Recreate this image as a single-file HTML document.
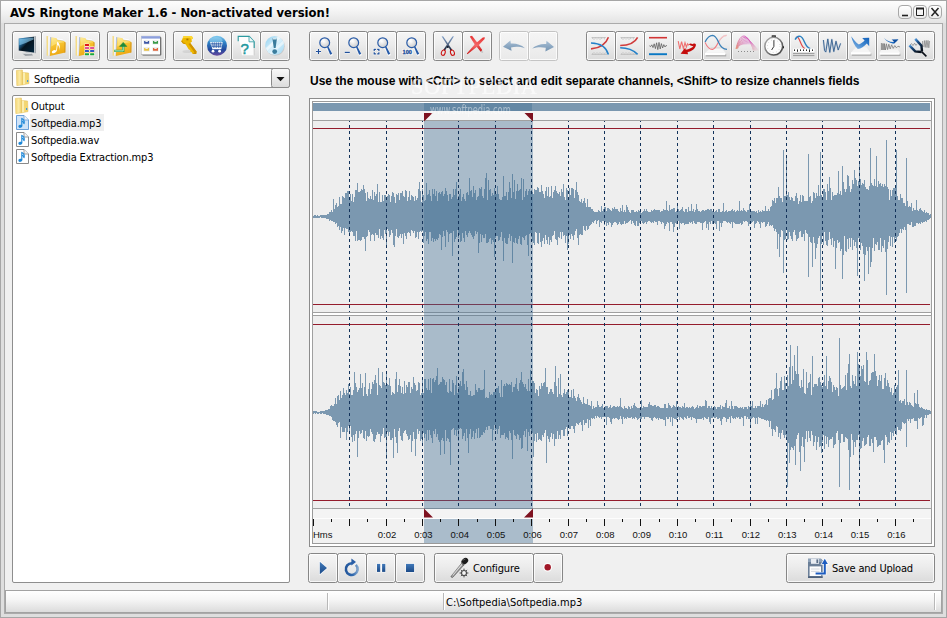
<!DOCTYPE html>
<html lang="en"><head><meta charset="utf-8"><title>AVS Ringtone Maker 1.6 - Non-activated version!</title>
<style>
html,body{margin:0;padding:0}
body{width:947px;height:618px;position:relative;overflow:hidden;background:#dedede;font-family:"Liberation Sans",sans-serif;font-size:11px;color:#000}
div,span,svg{position:absolute;box-sizing:border-box}
#win{left:0;top:0;width:947px;height:618px;border:1px solid #a6a6a6;background:#dedede}
#tbar{left:1px;top:1px;width:945px;height:22px;background:linear-gradient(#fdfdfd,#f4f4f4 45%,#e4e4e4)}
#title{left:10px;top:4px;font-weight:bold;font-size:12.9px;line-height:17px;white-space:nowrap;font-family:"DejaVu Sans Condensed","Liberation Sans",sans-serif}
.wb{top:5px;width:14px;height:14px;border:1px solid #a8a8a8;border-radius:4px;background:linear-gradient(#ffffff,#ececec)}
#frame{left:4px;top:23px;width:939px;height:591px;border:1px solid #ababab;background:#f0f0f0}
.btn{width:30px;height:30px;top:31px;border:1px solid #868686;border-radius:2.5px;background:linear-gradient(#f6f6f6,#ececec 45%,#dbdbdb);box-shadow:inset 0 0 0 1px rgba(255,255,255,.75)}
.btn.dis{border-color:#c4c4c4;background:linear-gradient(#f5f5f5,#e9e9e9)}
.btn svg{left:-1px;top:-1px;width:29px;height:30px;overflow:visible}
.pb{top:553px}
#combo{left:12px;top:68px;width:278px;height:20px;border:1px solid #8e8e8e;border-radius:3px;background:#fff}
#combobtn{left:271px;top:68px;width:19px;height:20px;border:1px solid #8a8a8a;border-radius:2.5px;background:linear-gradient(#f8f8f8,#dcdcdc)}
#list{left:12px;top:95px;width:278px;height:488px;border:1px solid #8e8e8e;border-radius:2px;background:#fff}
.it{left:0;height:17px;line-height:17px;white-space:nowrap;font-size:11px;letter-spacing:-0.15px;font-family:"DejaVu Sans Condensed","Liberation Sans",sans-serif}
.it span{position:absolute;left:19px;top:0}
#hint{left:310px;top:74px;font-weight:bold;font-size:12px;line-height:15px;white-space:nowrap}
#wv{left:309px;top:98px;width:626px;height:449px;border:1px solid #8c8c8c;background:#fff}
#wvsvg{left:0;top:0;width:947px;height:618px}
#status{left:5px;top:590px;width:937px;height:23px;border:1px solid #a2a2a2;background:linear-gradient(#ffffff,#f6f6f6 40%,#dcdcdc)}
#stxt{left:446px;top:596px;font-size:11px;line-height:14px;white-space:nowrap;font-family:"DejaVu Sans Condensed","Liberation Sans",sans-serif}
.tl{font-size:9.5px;line-height:11px;white-space:nowrap;color:#111}
.bl{font-size:11px;letter-spacing:-0.15px;line-height:14px;white-space:nowrap;font-family:"DejaVu Sans Condensed","Liberation Sans",sans-serif}
</style></head><body>
<svg width="0" height="0" style="left:0;top:0"><defs>
<linearGradient id="gold" x1="0" y1="0" x2="0.3" y2="1"><stop offset="0" stop-color="#fde99a"/><stop offset=".35" stop-color="#f9ca38"/><stop offset="1" stop-color="#eda814"/></linearGradient>
<linearGradient id="goldb" x1="0" y1="0" x2="1" y2="0"><stop offset="0" stop-color="#f1cf63"/><stop offset="1" stop-color="#fbeeb2"/></linearGradient>
<linearGradient id="bblue" x1="0" y1="0" x2="0" y2="1"><stop offset="0" stop-color="#4179b9"/><stop offset="1" stop-color="#1b4a88"/></linearGradient>
<radialGradient id="lens" cx=".4" cy=".35" r=".7"><stop offset="0" stop-color="#ffffff"/><stop offset="1" stop-color="#c9c9c9"/></radialGradient>
<linearGradient id="scr" x1="0" y1="0" x2="1" y2="1"><stop offset="0" stop-color="#5fb0e2"/><stop offset=".3" stop-color="#1d5f8e"/><stop offset=".5" stop-color="#06131e"/><stop offset="1" stop-color="#02263e"/></linearGradient>
<linearGradient id="globe" x1="0" y1="0" x2="0" y2="1"><stop offset="0" stop-color="#7fcbf0"/><stop offset=".35" stop-color="#2d7fc4"/><stop offset=".7" stop-color="#23489c"/><stop offset="1" stop-color="#6a4aa0"/></linearGradient>
<linearGradient id="abt" x1="0" y1="0" x2="1" y2="1"><stop offset="0" stop-color="#8fd0f0"/><stop offset=".5" stop-color="#d8f0fb"/><stop offset="1" stop-color="#9fd8f4"/></linearGradient>
<linearGradient id="redx" x1="0" y1="0" x2="0" y2="1"><stop offset="0" stop-color="#e83030"/><stop offset=".5" stop-color="#f46a6a"/><stop offset="1" stop-color="#c81010"/></linearGradient>
<linearGradient id="blade1" x1="0" y1="0" x2="0" y2="1"><stop offset="0" stop-color="#7d9cc6"/><stop offset=".5" stop-color="#5a6f8e"/><stop offset="1" stop-color="#10182a"/></linearGradient>
<linearGradient id="undo" x1="0" y1="0" x2="0" y2="1"><stop offset="0" stop-color="#a9c0d6"/><stop offset="1" stop-color="#7292b0"/></linearGradient>
<linearGradient id="arr" x1="0" y1="1" x2="1" y2="0"><stop offset="0" stop-color="#8fbbe6"/><stop offset=".5" stop-color="#3f86cf"/><stop offset="1" stop-color="#0b5cb8"/></linearGradient>
<linearGradient id="fan" x1="0" y1="1" x2=".6" y2="0"><stop offset="0" stop-color="#e89a6a"/><stop offset="1" stop-color="#cf3fb4"/></linearGradient>
<linearGradient id="fanfade" x1="0" y1="0" x2="1" y2="0"><stop offset="0" stop-color="#fff"/><stop offset=".55" stop-color="#fff"/><stop offset="1" stop-color="#000"/></linearGradient>
<linearGradient id="ring" x1="0" y1="0" x2="1" y2="1"><stop offset="0" stop-color="#b0b0b0"/><stop offset="1" stop-color="#3c3c3c"/></linearGradient>
<linearGradient id="fork" x1="0" y1="0" x2=".7" y2="1"><stop offset="0" stop-color="#4f9ae0"/><stop offset=".35" stop-color="#1f4f86"/><stop offset="1" stop-color="#0a1420"/></linearGradient>
<linearGradient id="loopg" x1="0" y1="0" x2="1" y2="0"><stop offset="0" stop-color="#24579c"/><stop offset=".6" stop-color="#2f68ae"/><stop offset="1" stop-color="#7fa3cc"/></linearGradient>
<linearGradient id="fold16" x1="0" y1="0" x2="1" y2="0"><stop offset="0" stop-color="#f4d877"/><stop offset=".5" stop-color="#fbeaa6"/><stop offset="1" stop-color="#eec95a"/></linearGradient>
</defs></svg>
<div id="win"></div>
<div id="tbar"></div>
<div id="title">AVS Ringtone Maker 1.6 - Non-activated version!</div>
<div class="wb" style="left:898px"><svg width="12" height="12" style="left:0;top:0"><path d="M3,9.5H9" stroke="#222" stroke-width="1.6"/></svg></div>
<div class="wb" style="left:913px"><svg width="12" height="12" style="left:0;top:0"><path d="M2.5,2.5H9.5V9.5H2.5Z" fill="none" stroke="#222" stroke-width="1"/><path d="M2,2.5H10" stroke="#222" stroke-width="2"/></svg></div>
<div class="wb" style="left:928px"><svg width="12" height="12" style="left:0;top:0"><path d="M2.5,2L9.5,10M9.5,2L2.5,10" stroke="#222" stroke-width="1.5"/></svg></div>
<div id="frame"></div>
<div class="btn" style="left:12px"><svg viewBox="0 0 29 30"><path d="M10.4,22.4L19.6,22.2L21,24.4L13.4,25Z" fill="#9ea3a8"/><path d="M13.6,20L18.6,21V22.8H13.6Z" fill="#c5c9cd"/><path d="M10.4,22.4L19.6,22.2L19.8,22.9L10.8,23.1Z" fill="#e3e6e8"/><path d="M6.6,7.4L23.6,5.2V22.2L6.6,19.6Z" fill="#aeb4ba"/><path d="M6.8,7.6L22.2,5.7V21.5L6.8,19.4Z" fill="url(#scr)"/><path d="M7.3,8.2L21.6,6.4V8.5C16,11 11,13.5 7.3,14.2Z" fill="#8fd0f4" opacity=".6"/><path d="M22.2,5.7L23.8,5.2V22.2L22.2,21.5Z" fill="#c8cdd2"/><path d="M23.2,5.4L23.8,5.2V22.2L23.2,22Z" fill="#8e949a"/></svg></div>
<div class="btn" style="left:41px"><svg viewBox="0 0 29 30"><path d="M5.6,4.9L7.6,5.2V24.5L5.8,24.8Z" fill="url(#goldb)"/><path d="M7.2,5.3L10.6,6.2L10.2,24L7.3,24.6Z" fill="#f6f7fb"/><path d="M9,6L10.8,6.6L10.2,24L8.6,24.4Z" fill="#b4bfd8"/><path d="M15.6,7.2L21.8,8.2L23,10.4L16.2,9.6Z" fill="#fcfcfe"/><path d="M15.8,8.4L22.4,9.4L23,10.4L16.2,9.6Z" fill="#c9d2e4"/><path d="M10.4,6.3L15.5,7.2L16.5,9.1L22.8,10.1L24.5,11.4L24.3,21.5L8.8,24.9Z" fill="url(#gold)"/><path d="M10.9,6.8L15.2,7.6L16.2,9.5L22.6,10.5L23.4,11.2C18,11.6 13.5,13 10.3,15.5Z" fill="#fdeea0" opacity=".55"/><path d="M24.5,11.4L24.3,21.5L23.4,21.7L23.5,10.7Z" fill="#c98a1c" opacity=".75"/><ellipse cx="13" cy="20.6" rx="2.3" ry="1.5" transform="rotate(-20 13 20.6)" fill="#fff"/><path d="M15,20.3L16.2,10.4C18.5,12.5 19.6,14.5 18.2,19.4C18.6,16 17.8,14.6 16.6,14L15.8,20.6Z" fill="#fff"/></svg></div>
<div class="btn" style="left:70px"><svg viewBox="0 0 29 30"><path d="M5.6,4.9L7.6,5.2V24.5L5.8,24.8Z" fill="url(#goldb)"/><path d="M7.2,5.3L10.6,6.2L10.2,24L7.3,24.6Z" fill="#f6f7fb"/><path d="M9,6L10.8,6.6L10.2,24L8.6,24.4Z" fill="#b4bfd8"/><path d="M15.6,7.2L21.8,8.2L23,10.4L16.2,9.6Z" fill="#fcfcfe"/><path d="M15.8,8.4L22.4,9.4L23,10.4L16.2,9.6Z" fill="#c9d2e4"/><path d="M10.4,6.3L15.5,7.2L16.5,9.1L22.8,10.1L24.5,11.4L24.3,21.5L8.8,24.9Z" fill="url(#gold)"/><path d="M10.9,6.8L15.2,7.6L16.2,9.5L22.6,10.5L23.4,11.2C18,11.6 13.5,13 10.3,15.5Z" fill="#fdeea0" opacity=".55"/><path d="M24.5,11.4L24.3,21.5L23.4,21.7L23.5,10.7Z" fill="#c98a1c" opacity=".75"/><rect x="14.450000000000001" y="12.55" width="5" height="2.9" rx=".5" fill="#fffdf2"/><rect x="14.9" y="13" width="4.1" height="2" rx=".3" fill="#e01818"/><rect x="14.450000000000001" y="15.600000000000001" width="5" height="2.9" rx=".5" fill="#fffdf2"/><rect x="14.9" y="16.05" width="4.1" height="2" rx=".3" fill="#e0509a"/><rect x="19.650000000000002" y="15.600000000000001" width="5" height="2.9" rx=".5" fill="#fffdf2"/><rect x="20.1" y="16.05" width="4.1" height="2" rx=".3" fill="#e0509a"/><rect x="14.450000000000001" y="18.650000000000002" width="5" height="2.9" rx=".5" fill="#fffdf2"/><rect x="14.9" y="19.1" width="4.1" height="2" rx=".3" fill="#2e58c8"/><rect x="19.650000000000002" y="18.650000000000002" width="5" height="2.9" rx=".5" fill="#fffdf2"/><rect x="20.1" y="19.1" width="4.1" height="2" rx=".3" fill="#2e58c8"/><rect x="14.450000000000001" y="21.7" width="5" height="2.9" rx=".5" fill="#fffdf2"/><rect x="14.9" y="22.15" width="4.1" height="2" rx=".3" fill="#18a83a"/><rect x="19.650000000000002" y="21.7" width="5" height="2.9" rx=".5" fill="#fffdf2"/><rect x="20.1" y="22.15" width="4.1" height="2" rx=".3" fill="#18a83a"/></svg></div>
<div class="btn" style="left:107px"><svg viewBox="0 0 29 30"><path d="M5.6,4.9L7.6,5.2V24.5L5.8,24.8Z" fill="url(#goldb)"/><path d="M7.2,5.3L10.6,6.2L10.2,24L7.3,24.6Z" fill="#f6f7fb"/><path d="M9,6L10.8,6.6L10.2,24L8.6,24.4Z" fill="#b4bfd8"/><path d="M15.6,7.2L21.8,8.2L23,10.4L16.2,9.6Z" fill="#fcfcfe"/><path d="M15.8,8.4L22.4,9.4L23,10.4L16.2,9.6Z" fill="#c9d2e4"/><path d="M10.4,6.3L15.5,7.2L16.5,9.1L22.8,10.1L24.5,11.4L24.3,21.5L8.8,24.9Z" fill="url(#gold)"/><path d="M10.9,6.8L15.2,7.6L16.2,9.5L22.6,10.5L23.4,11.2C18,11.6 13.5,13 10.3,15.5Z" fill="#fdeea0" opacity=".55"/><path d="M24.5,11.4L24.3,21.5L23.4,21.7L23.5,10.7Z" fill="#c98a1c" opacity=".75"/><path d="M7.2,19.9H16.2V14.5" fill="none" stroke="#35a557" stroke-width="2.4"/><path d="M7.8,19.9H16.2V14.5" fill="none" stroke="#c4f0d0" stroke-width=".9"/><path d="M16.2,11.4L19.8,15.4H12.6Z" fill="#1c8a3c" stroke="#1c8a3c" stroke-width=".6" stroke-linejoin="round"/></svg></div>
<div class="btn" style="left:136px"><svg viewBox="0 0 29 30"><rect x="6.1" y="6" width="19.2" height="18.4" rx="1" fill="#4a4a4a" opacity=".9"/><rect x="5" y="4.9" width="19.4" height="18.9" fill="#9a9a9a"/><rect x="5.4" y="5.2" width="18.6" height="18.2" fill="#fff"/><rect x="5.4" y="5.2" width="18.6" height="2.4" fill="#8c9fdc"/><rect x="7.3999999999999995" y="9.1" width="6.4" height="4.4" fill="#ececec"/><path d="M8.1,10h1.3v1h2.4v-1h1.3v2.8h-5z" fill="#3c55a5"/><rect x="16.3" y="9.1" width="6.4" height="4.4" fill="#ececec"/><path d="M17,10h1.3v1h2.4v-1h1.3v2.8h-5z" fill="#3c9a48"/><rect x="7.3999999999999995" y="16.1" width="6.4" height="4.4" fill="#ececec"/><path d="M8.1,17h1.3v1h2.4v-1h1.3v2.8h-5z" fill="#e8c040"/><rect x="16.3" y="16.1" width="6.4" height="4.4" fill="#ececec"/><path d="M17,17h1.3v1h2.4v-1h1.3v2.8h-5z" fill="#e0643c"/></svg></div>
<div class="btn" style="left:173px"><svg viewBox="0 0 29 30"><ellipse cx="15" cy="20.6" rx="5.5" ry="1.5" fill="#999" opacity=".22"/><path d="M10.4,5.2L18.8,5L20,7.4L18.4,8.6L19,10.6L17.2,12L23.6,20.6L23.2,23L19.6,23L18.8,21.2L17.4,20.8L17.2,19L15.8,18.6L12.6,13.2L10,12.6L8.2,10.2L9.4,8Z" fill="#eeb800"/><path d="M17.2,12L23.6,20.6L23.2,23L19.6,23L21.4,21.4L15.4,13Z" fill="#cf9200"/><path d="M10.4,5.2L18.8,5L20,7.4L18.4,8.6L17,6.8L10.6,7L9.4,8Z" fill="#fdd835"/><path d="M8.2,10.2L10,12.6L12.6,13.2L12.2,12L10.4,11.4L9.2,9.6Z" fill="#cf9200"/><rect x="13.4" y="7.6" width="2" height="1.7" fill="#a87800"/></svg></div>
<div class="btn" style="left:202px"><svg viewBox="0 0 29 30"><circle cx="15" cy="14.8" r="10" fill="url(#globe)"/><ellipse cx="14" cy="9.5" rx="6.5" ry="3.6" fill="#9fdcf6" opacity=".5"/><path d="M7.8,11.2H20.8L19.4,17H10.2Z" fill="#fff"/><path d="M10.2,17.6H19.4" stroke="#fff" stroke-width="1.2"/><path d="M8.4,12.6H20.4M9,14H20M9.6,15.5H19.6M10.6,11.4L11.4,17M12.6,11.4L13,17M14.6,11.4V17M16.6,11.4L16.4,17M18.6,11.4L18,17" stroke="#2a5aa8" stroke-width=".7" fill="none"/><circle cx="11" cy="20.2" r="1.4" fill="#fff"/><circle cx="17.6" cy="20.2" r="1.4" fill="#fff"/></svg></div>
<div class="btn" style="left:231px"><svg viewBox="0 0 29 30"><path d="M7.4,5.6H18L23.4,10.8V24.2H11Z" fill="#fff" opacity=".85"/><path d="M22.6,11V24L23.8,24.6V11Z" fill="#bbb" opacity=".6"/><path d="M7.2,10.2V5.4H18.2L23.2,10.6V17" fill="none" stroke="#2c9aa0" stroke-width="1.1"/><path d="M18,5.6V10.8H23" fill="#eef7f8" stroke="#2c9aa0" stroke-width=".8"/><text x="9.4" y="22.8" font-family="Liberation Sans,sans-serif" font-size="15" fill="#1d989e" stroke="#1d989e" stroke-width=".5">?</text></svg></div>
<div class="btn" style="left:260px"><svg viewBox="0 0 29 30"><circle cx="15.2" cy="15.2" r="9.6" fill="#999" opacity=".35"/><circle cx="14.7" cy="14.5" r="9.5" fill="url(#abt)"/><path d="M6,17L18,5.6L20.6,7L7,20Z" fill="#fff" opacity=".6"/><path d="M9.4,22L23.4,9.6L24,12.6L12,23.4Z" fill="#fff" opacity=".5"/><path d="M12.4,7.2H17L15.6,17H13.8Z" fill="#3a7c9c"/><path d="M12.6,7H16.8L16.6,8.6H12.8Z" fill="#cfe6f0"/><circle cx="14.7" cy="20.6" r="2.4" fill="#3a7c9c"/></svg></div>
<div class="btn" style="left:309px"><svg viewBox="0 0 29 30"><path d="M18.2,16L22.2,23.4" stroke="#fff" stroke-width="3.2" stroke-linecap="round" opacity=".7"/><path d="M17.8,15.4L19.2,15.2L23.2,22.8L21.2,23.8Z" fill="#2459a8"/><circle cx="15.7" cy="11.7" r="4.9" fill="url(#lens)" stroke="#2a5ca8" stroke-width="1.2"/><path d="M12.4,11A3.4,3.4 0 0 1 15.6,8.4" fill="none" stroke="#fff" stroke-width="1" opacity=".9"/><path d="M7,20.5H12M9.5,18V23" stroke="#fff" stroke-width="2.6" opacity=".8"/><path d="M7,20.5H12M9.5,18V23" stroke="#1f4f9a" stroke-width="1.2"/></svg></div>
<div class="btn" style="left:338px"><svg viewBox="0 0 29 30"><path d="M18.2,16L22.2,23.4" stroke="#fff" stroke-width="3.2" stroke-linecap="round" opacity=".7"/><path d="M17.8,15.4L19.2,15.2L23.2,22.8L21.2,23.8Z" fill="#2459a8"/><circle cx="15.7" cy="11.7" r="4.9" fill="url(#lens)" stroke="#2a5ca8" stroke-width="1.2"/><path d="M12.4,11A3.4,3.4 0 0 1 15.6,8.4" fill="none" stroke="#fff" stroke-width="1" opacity=".9"/><path d="M6.8,21.4H11.8" stroke="#fff" stroke-width="2.8" opacity=".8"/><path d="M6.8,21.4H11.8" stroke="#1f4f9a" stroke-width="1.3"/></svg></div>
<div class="btn" style="left:367px"><svg viewBox="0 0 29 30"><path d="M18.2,16L22.2,23.4" stroke="#fff" stroke-width="3.2" stroke-linecap="round" opacity=".7"/><path d="M17.8,15.4L19.2,15.2L23.2,22.8L21.2,23.8Z" fill="#2459a8"/><circle cx="15.7" cy="11.7" r="4.9" fill="url(#lens)" stroke="#2a5ca8" stroke-width="1.2"/><path d="M12.4,11A3.4,3.4 0 0 1 15.6,8.4" fill="none" stroke="#fff" stroke-width="1" opacity=".9"/><path d="M7.2,20V18.3H8.9M10.2,18.3H11.9V20M11.9,21.2V22.9H10.2M8.9,22.9H7.2V21.2" fill="none" stroke="#fff" stroke-width="2.6" opacity=".8"/><path d="M7.2,20V18.3H8.9M10.2,18.3H11.9V20M11.9,21.2V22.9H10.2M8.9,22.9H7.2V21.2" fill="none" stroke="#1f4f9a" stroke-width="1.2"/></svg></div>
<div class="btn" style="left:396px"><svg viewBox="0 0 29 30"><path d="M18.2,16L22.2,23.4" stroke="#fff" stroke-width="3.2" stroke-linecap="round" opacity=".7"/><path d="M17.8,15.4L19.2,15.2L23.2,22.8L21.2,23.8Z" fill="#2459a8"/><circle cx="15.7" cy="11.7" r="4.9" fill="url(#lens)" stroke="#2a5ca8" stroke-width="1.2"/><path d="M12.4,11A3.4,3.4 0 0 1 15.6,8.4" fill="none" stroke="#fff" stroke-width="1" opacity=".9"/><rect x="6" y="18.4" width="10.8" height="5.2" fill="#fff" opacity=".75"/><text x="6.6" y="23" font-family="Liberation Sans,sans-serif" font-weight="bold" font-size="5.4" fill="#1f4f9a" stroke="#1f4f9a" stroke-width=".3" textLength="9.4" lengthAdjust="spacingAndGlyphs">100</text></svg></div>
<div class="btn" style="left:433px"><svg viewBox="0 0 29 30"><path d="M8.6,5.2L10.2,5.4L19.2,18.8L17.8,19.8Z" fill="url(#blade1)"/><path d="M21,5.2L19.4,5.4L10.4,18.8L11.8,19.8Z" fill="url(#blade1)"/><ellipse cx="10.3" cy="21.7" rx="1.9" ry="2.8" transform="rotate(18 10.3 21.6)" fill="none" stroke="#cc1010" stroke-width="1.05"/><ellipse cx="19.4" cy="21.7" rx="1.9" ry="2.8" transform="rotate(-18 19.4 21.6)" fill="none" stroke="#cc1010" stroke-width="1.05"/><circle cx="14.8" cy="16" r="1" fill="#0c1424"/></svg></div>
<div class="btn" style="left:462px"><svg viewBox="0 0 29 30"><path d="M9,6.2L20.2,21" stroke="#777" stroke-width="2" opacity=".25" stroke-linecap="round"/><path d="M7.8,5.4L10,4.8L15.2,11.6L20.2,19L18.8,20.8L12.6,13.2Z" fill="url(#redx)"/><path d="M22.8,6.2L22.6,8L16,15L5.4,23.2L4.9,22.4L13,13L20.8,6.6Z" fill="url(#redx)"/></svg></div>
<div class="btn dis" style="left:499px"><svg viewBox="0 0 29 30"><path d="M4,15.8L11.4,9.4L11.8,12.6C17,12.2 22,13.6 26,17.2C21,15.4 16,15.4 12,16.4L12.6,19.8Z" fill="url(#undo)"/></svg></div>
<div class="btn dis" style="left:528px"><svg viewBox="0 0 29 30"><path d="M26,16L18.5,9.8L18.2,13C13,12.6 8,14 4.2,17.6C9,15.8 14,15.8 17.8,16.8L17.4,20.6Z" fill="url(#undo)"/></svg></div>
<div class="btn" style="left:586px"><svg viewBox="0 0 29 30"><path d="M5.5,6.5H20M6.5,6.5V8M8,6.5V9M9.5,6.5V7.6M11,6.5V8.6M12.5,6.5V7.6M14,6.5V9M15.5,6.5V8M17,6.5V7.6M18.5,6.5V8.4" stroke="#9a9a9a" stroke-width=".7" opacity=".6" fill="none"/><path d="M5.5,23.5H21M6.5,23.5V22M8,23.5V21M9.5,23.5V22.4M11,23.5V21.2M12.5,23.5V22.4M14,23.5V21M15.5,23.5V22M17,23.5V21.4M18.5,23.5V22M20,23.5V21" stroke="#a8a8a8" stroke-width=".7" opacity=".6" fill="none"/><path d="M5,17.9C12,17.4 19.5,14.5 22.4,6.3" fill="none" stroke="#d03c3c" stroke-width="1.6"/><path d="M5,12C13,12.2 20,15.5 22.4,23.4" fill="none" stroke="#2480c8" stroke-width="1.6"/></svg></div>
<div class="btn" style="left:615px"><svg viewBox="0 0 29 30"><path d="M5.5,6.5H20M6.5,6.5V8M8,6.5V9M9.5,6.5V7.6M11,6.5V8.6M12.5,6.5V7.6M14,6.5V9M15.5,6.5V8M17,6.5V7.6M18.5,6.5V8.4" stroke="#9a9a9a" stroke-width=".7" opacity=".6" fill="none"/><path d="M5.5,23.5H21M6.5,23.5V22M8,23.5V21M9.5,23.5V22.4M11,23.5V21.2M12.5,23.5V22.4M14,23.5V21M15.5,23.5V22M17,23.5V21.4M18.5,23.5V22M20,23.5V21" stroke="#a8a8a8" stroke-width=".7" opacity=".6" fill="none"/><path d="M5.2,14.5C12,14.4 19.5,12.5 22.6,6.3" fill="none" stroke="#d03c3c" stroke-width="1.6"/><path d="M5.2,16.8C12,16.8 18,18.8 22.6,23.4" fill="none" stroke="#2480c8" stroke-width="1.6"/></svg></div>
<div class="btn" style="left:644px"><svg viewBox="0 0 29 30"><path d="M5,6.7H23" stroke="#d23434" stroke-width="1.6"/><path d="M5,23.2H23" stroke="#0a78c4" stroke-width="1.9"/><path d="M5.4,14.8L6.6,15.6L7.8,13.8L9,16.6L10.2,12.8L11.4,17.6L12.6,11.8L13.8,18.6L15,11.4L16.2,18L17.4,12.6L18.6,17L19.8,13.6L21,16L22.2,14.4L23,15" fill="none" stroke="#5a5a5a" stroke-width=".75"/></svg></div>
<div class="btn" style="left:673px"><svg viewBox="0 0 29 30"><path d="M5.2,10.2L6.8,18L8.6,10.6L10.4,17.6L12,11.6L13.4,16L14.6,12.8L15.8,14.4" fill="none" stroke="#f07070" stroke-width="1.1"/><path d="M15.6,13.6C17,12.2 18.6,12.4 19.2,13.2C20.4,12.2 22.6,12.4 23,13.8C22.4,17.8 18.6,20.6 14.6,21L15,23.2L7.6,22.8L12.2,16.8L12.8,18.8C16,18.4 19.4,16.8 20.6,14.8C19.6,15.2 18.6,15.2 17.6,14.6C17,14 16.4,13.8 15.6,13.6Z" fill="#c40c0c"/></svg></div>
<div class="btn" style="left:702px"><svg viewBox="0 0 29 30"><path d="M8.6,17H19.6L23.4,21.8H3.4Z" fill="#f7f7f7"/><path d="M8.6,17H19.6" stroke="#c8c8c8" stroke-width=".6"/><rect x="3.8" y="23.2" width="20.4" height="2.2" fill="#777" opacity=".55"/><rect x="3" y="21.8" width="20.4" height="2.4" fill="#fff"/><path d="M3.1,11.4C6,18 8.6,18.6 10.6,18.4C13.4,18 15,14 16.5,11C18,8 20,4.8 24.6,4.4" fill="none" stroke="#f07a80" stroke-width="1.1"/><path d="M17,9.6C18.6,6.6 21,4.6 24.8,4.4" fill="none" stroke="#f4f4f4" stroke-width="1.6" opacity=".6"/><path d="M3.1,11C5.4,6.4 8,4.4 10.6,4.4C13.6,4.6 15,8 16.5,11.2C18,14.6 20.4,18.2 25,18.4" fill="none" stroke="#3a80b8" stroke-width="1.25"/></svg></div>
<div class="btn" style="left:731px"><svg viewBox="0 0 29 30"><mask id="fm"><rect x="0" y="0" width="29" height="30" fill="url(#fanfade)"/></mask><g mask="url(#fm)"><path d="M5.0,18.0C6.0,12.0 9.0,5.0 13.0,5.0C16.0,5.0 20.0,11.0 22.4,19.5" fill="none" stroke="url(#fan)" stroke-width=".8" opacity="0.95"/><path d="M5.3,17.9C6.3,12.0 10.2,6.3 14.2,6.3C17.2,6.3 21.0,12.3 23.4,19.5" fill="none" stroke="url(#fan)" stroke-width=".8" opacity="0.87"/><path d="M5.6,17.8C6.6,12.0 11.4,7.6 15.4,7.6C18.4,7.6 22.0,13.6 24.4,19.5" fill="none" stroke="url(#fan)" stroke-width=".8" opacity="0.79"/><path d="M5.9,17.7C6.9,12.0 12.6,8.9 16.6,8.9C19.6,8.9 23.0,14.9 25.4,19.5" fill="none" stroke="url(#fan)" stroke-width=".8" opacity="0.71"/><path d="M6.2,17.6C7.2,12.0 13.8,10.2 17.8,10.2C20.8,10.2 24.0,16.2 26.4,19.5" fill="none" stroke="url(#fan)" stroke-width=".8" opacity="0.63"/><path d="M6.5,17.5C7.5,12.0 15.0,11.5 19.0,11.5C22.0,11.5 25.0,17.5 27.4,19.5" fill="none" stroke="url(#fan)" stroke-width=".8" opacity="0.55"/><path d="M6.8,17.4C7.8,12.0 16.2,12.8 20.2,12.8C23.2,12.8 26.0,18.8 28.4,19.5" fill="none" stroke="url(#fan)" stroke-width=".8" opacity="0.47"/></g><path d="M7,20.5H24" stroke="#8a8a8a" stroke-width="1" stroke-dasharray="1,2"/></svg></div>
<div class="btn" style="left:760px"><svg viewBox="0 0 29 30"><circle cx="14.2" cy="15.8" r="9.3" fill="#777" opacity=".3"/><rect x="11.6" y="4.2" width="4.4" height="2" rx=".6" fill="#333"/><path d="M22.4,14.6L24,15.4V17.4L22.6,17Z" fill="#222"/><circle cx="13.7" cy="15.2" r="8.9" fill="#fdfdfd" stroke="url(#ring)" stroke-width="1.5"/><circle cx="13.7" cy="15.2" r="6.3" fill="none" stroke="#bbb" stroke-width=".8" stroke-dasharray=".7,2.6"/><path d="M13.9,9.2V15.4L11.6,19" fill="none" stroke="#222" stroke-width=".9" stroke-linejoin="round"/></svg></div>
<div class="btn" style="left:789px"><svg viewBox="0 0 29 30"><path d="M7,5.8C11,4.4 11.4,16.4 16,17.6" fill="none" stroke="#e24a4a" stroke-width="1.2"/><path d="M6.6,6C7.6,5.4 8.4,5.4 9,5.8" stroke="#f3eaea" stroke-width="1.4" fill="none" opacity=".8"/><path d="M6.1,8.6C7.4,6 9.4,4.8 11.4,5.4C15.6,6.8 15.4,16.6 21.3,17.7" fill="none" stroke="#2c80c0" stroke-width="1.4"/><rect x="4" y="17.6" width="21.4" height="3.4" fill="#fff"/><path d="M5.5,18.4V20M8.5,18.4V20.8M11.5,18.4V20M14.5,18.4V20M17.5,18.4V20M20.5,18.4V21M23.5,18.4V20" stroke="#111" stroke-width=".9"/><path d="M4,22.6H25.4M4,24.6H25.4" stroke="#9a9a9a" stroke-width="1"/></svg></div>
<div class="btn" style="left:818px"><svg viewBox="0 0 29 30"><path d="M5.4,9L6.6,19.6L7.8,21L9.8,8L11.8,21.4L13.8,8.4L15.8,20.6L18,10.2L20.2,19L22.6,12.4" fill="none" stroke="#9fb6cf" stroke-width="1.8" opacity=".45" stroke-linejoin="round"/><path d="M5.4,9L6.6,19.6L7.8,21L9.8,8L11.8,21.4L13.8,8.4L15.8,20.6L18,10.2L20.2,19L22.6,12.4" fill="none" stroke="#34608f" stroke-width=".9" stroke-linejoin="round"/></svg></div>
<div class="btn" style="left:847px"><svg viewBox="0 0 29 30"><path d="M9,16.2H19.4L23.4,21.4H4Z" fill="#f6f6f6" opacity=".9"/><rect x="4.8" y="22.6" width="19.6" height="2.2" fill="#777" opacity=".5"/><rect x="4" y="21.2" width="19.6" height="2.3" fill="#fff"/><path d="M4.2,5.2C6.8,8.6 9,11.6 11.8,13.4C14,12.8 16,11.4 17.6,9.6L15.2,7L22.2,6.8L22.2,15.2L19.8,12.4C17.2,15.4 14,17.6 10.8,18C7.6,15 5.2,10 4.2,5.2Z" fill="url(#arr)"/></svg></div>
<div class="btn" style="left:876px"><svg viewBox="0 0 29 30"><path d="M5.6,18.4H21.8L24,21.6H3.6Z" fill="#f6f6f6" opacity=".9"/><rect x="4.4" y="22.8" width="20" height="2.2" fill="#777" opacity=".5"/><rect x="3.6" y="21.4" width="20" height="2.3" fill="#fff"/><path d="M5.4,12V19M6.4,19V12.4M7.4,12.4V19M8.4,19V12.6L9.4,19L10.4,12.8L11.6,18.6L12.8,13.2L14.2,18L15.6,13.8L17.2,17.4L18.8,14.6L20.4,16.8L22,15.2L24,16" fill="none" stroke="#7a7a7a" stroke-width=".8"/><path d="M8,6.8C10,10 13,12 17,12.4L16.4,13.4L22,9L16,8.6L22.2,8.6L22,9.2L17.4,11C13,11 10,9.4 8,6.8Z" fill="#1f6cc0"/><path d="M15.6,8.4H22.4L18,12.8C18.4,11 17.6,9.6 15.6,8.4Z" fill="#0f4fa0"/></svg></div>
<div class="btn" style="left:905px"><svg viewBox="0 0 29 30"><path d="M5,14L6.6,12.6L8,14.6L9.6,12.2L11,14.4L12.2,12.8" fill="none" stroke="#8c8c8c" stroke-width=".8"/><path d="M17.6,10V16M18.8,16L19.4,9.6L20.2,16.4L21.2,9.4L22,16.6L23,9.4L23.8,16.8L24.6,10" fill="none" stroke="#8c8c8c" stroke-width=".8"/><path d="M10.2,7.9L16.4,14.6L17,20.4" fill="none" stroke="url(#fork)" stroke-width="2.4"/><path d="M4.4,14.4L10.2,20.4L16.6,21" fill="none" stroke="url(#fork)" stroke-width="2.4"/><path d="M16.6,20.6L21.4,25.4" stroke="#0a0f18" stroke-width="1.6"/></svg></div>
<div class="btn pb" style="left:308px"><svg viewBox="0 0 29 30"><path d="M11.8,8.8L19,15L11.8,21.2Z" fill="#fff" opacity=".8" stroke="#fff" stroke-width="1.4" stroke-linejoin="round"/><path d="M11.8,8.8L19,15L11.8,21.2Z" fill="url(#bblue)"/></svg></div>
<div class="btn pb" style="left:337px"><svg viewBox="0 0 29 30"><path d="M15,10.2A5.9,5.9 0 1 0 18.9,11.9" fill="none" stroke="url(#loopg)" stroke-width="2.6"/><path d="M14.4,5.6L19,9L14.4,12.6Z" fill="#2a5ea6"/></svg></div>
<div class="btn pb" style="left:366px"><svg viewBox="0 0 29 30"><rect x="10.4" y="10.3" width="9.4" height="9.2" fill="#fff" opacity=".7"/><rect x="11" y="10.9" width="3.2" height="8" fill="url(#bblue)"/><rect x="16.1" y="10.9" width="3.2" height="8" fill="url(#bblue)"/></svg></div>
<div class="btn pb" style="left:395px"><svg viewBox="0 0 29 30"><rect x="10.4" y="10.3" width="9.4" height="9.3" fill="#fff" opacity=".7"/><rect x="11" y="10.9" width="8.1" height="8.1" fill="url(#bblue)"/></svg></div>
<div class="btn pb" style="left:434px;width:100px"><svg viewBox="0 0 29 30"><path d="M17.6,22.6C16.4,23.8 18,25 19.4,23.6" fill="none" stroke="#333" stroke-width=".9"/><path d="M17.8,22.4L27.4,10.4L29.8,12.2L19.6,23.6Z" fill="#8c8c8c" stroke="#555" stroke-width=".5"/><path d="M18.4,22.2L27.8,10.8L28.6,11.4L19,22.8Z" fill="#e0e0e0"/><ellipse cx="30.8" cy="8.2" rx="3.7" ry="2.8" transform="rotate(-40 30.8 8.2)" fill="#1a1a1a"/><path d="M28.6,7.4L31.4,6" stroke="#777" stroke-width=".7"/><path d="M27.8,10L30,12.4" stroke="#666" stroke-width="1.4"/><circle cx="30" cy="20" r="2.5" fill="#f4f4f4" stroke="#4a4a4a" stroke-width="1.2"/><path d="M30,15.6V17M30,23V24.4M25.6,20H27M33,20H34.4M26.9,16.9L27.9,17.9M32.1,22.1L33.1,23.1M26.9,23.1L27.9,22.1M32.1,17.9L33.1,16.9" stroke="#4a4a4a" stroke-width="1"/></svg></div><div class="bl" style="left:473px;top:562px">Configure</div>
<div class="btn pb" style="left:533px"><svg viewBox="0 0 29 30"><circle cx="14.7" cy="14.2" r="4.5" fill="#fff" opacity=".8"/><circle cx="14.7" cy="14.2" r="3.2" fill="#a01828"/></svg></div>
<div class="btn pb" style="left:786px;width:149px"><svg viewBox="0 0 29 30"><path d="M22,5.8H35L36.6,7.4V24.8H22Z" fill="#6b7f98"/><path d="M22,5.8H35L36.6,7.4V9H22Z" fill="#8fa2b8"/><rect x="25" y="5.8" width="8" height="5" fill="#e8ecf2"/><rect x="30.4" y="6.4" width="1.8" height="3.6" fill="#5a6d86"/><rect x="23.6" y="13.4" width="11.4" height="9.6" fill="#fdfdfd"/><path d="M25,16H33.6M25,18.4H33.6" stroke="#c8ced8" stroke-width=".8"/><rect x="22" y="23.4" width="14.6" height="1.6" fill="#4f627c"/><path d="M29.6,20.6H38.8V10.8" fill="none" stroke="#fff" stroke-width="3.4" opacity=".8"/><path d="M38.8,5.4L42.2,11.2H35.4Z" fill="#fff" stroke="#fff" stroke-width="1.2" opacity=".8"/><path d="M29.6,20.6H38.8V10.6" fill="none" stroke="#1c5cc0" stroke-width="2"/><path d="M38.8,5.8L41.8,11H35.8Z" fill="#1c5cc0"/></svg></div><div class="bl" style="left:832px;top:562px;letter-spacing:-0.2px">Save and Upload</div>
<div id="combo"></div><div id="combobtn"><svg width="16" height="18" style="left:0;top:0"><path d="M4.5,8H12.5L8.5,12.3Z" fill="#111"/></svg></div>
<div id="list"></div>
<svg style="left:15px;top:69px;width:18px;height:18px" viewBox="0 0 18 18"><path d="M1.4,1.4L7.4,1L8,15.8L1.8,16.6Z" fill="url(#fold16)" stroke="#e3bd55" stroke-width=".5"/><path d="M7.6,3.4L13.6,4L14,14.6L8,15.8Z" fill="#f3d671" stroke="#e3bd55" stroke-width=".5"/><path d="M8,3.6L10,3.8L10.2,15.2L8,15.6Z" fill="#fbeeb0"/><rect x="12" y="11" width="1.2" height="2" fill="#3c9ae0"/></svg><div class="it" style="left:34px;top:71px">Softpedia</div>
<svg style="left:14px;top:97px;width:18px;height:18px" viewBox="0 0 18 18"><path d="M1.4,1.4L7.4,1L8,15.8L1.8,16.6Z" fill="url(#fold16)" stroke="#e3bd55" stroke-width=".5"/><path d="M7.6,3.4L13.6,4L14,14.6L8,15.8Z" fill="#f3d671" stroke="#e3bd55" stroke-width=".5"/><path d="M8,3.6L10,3.8L10.2,15.2L8,15.6Z" fill="#fbeeb0"/><rect x="12" y="11" width="1.2" height="2" fill="#3c9ae0"/></svg><div class="it" style="left:31px;top:98px">Output</div>
<div style="left:30px;top:114px;width:74px;height:17px;background:#efefef"></div>
<svg style="left:14px;top:114px;width:18px;height:18px" viewBox="0 0 18 18"><path d="M2.5,1.5H10L14.5,6V15.5H2.5Z" fill="#cfe3f8" stroke="#6a9fd8" stroke-width="1"/><path d="M10,1.5V6H14.5" fill="#f4f4f4" stroke="#6a9fd8" stroke-width=".8"/><ellipse cx="6.3" cy="12.3" rx="2" ry="1.5" transform="rotate(-15 6.3 12.3)" fill="#1e88d8"/><path d="M7.8,12.3V4.6C9.8,5.6 10.8,7.4 10,10C9.9,8.6 9.2,7.6 8.2,7.2" fill="none" stroke="#1e88d8" stroke-width="1.1"/></svg><div class="it" style="left:31px;top:115px">Softpedia.mp3</div>
<svg style="left:14px;top:131px;width:18px;height:18px" viewBox="0 0 18 18"><path d="M2.5,1.5H10L14.5,6V15.5H2.5Z" fill="#ffffff" stroke="#8a8a8a" stroke-width="1"/><path d="M10,1.5V6H14.5" fill="#f4f4f4" stroke="#8a8a8a" stroke-width=".8"/><ellipse cx="6.3" cy="12.3" rx="2" ry="1.5" transform="rotate(-15 6.3 12.3)" fill="#1e88d8"/><path d="M7.8,12.3V4.6C9.8,5.6 10.8,7.4 10,10C9.9,8.6 9.2,7.6 8.2,7.2" fill="none" stroke="#1e88d8" stroke-width="1.1"/></svg><div class="it" style="left:31px;top:132px">Softpedia.wav</div>
<svg style="left:14px;top:148px;width:18px;height:18px" viewBox="0 0 18 18"><path d="M2.5,1.5H10L14.5,6V15.5H2.5Z" fill="#ffffff" stroke="#8a8a8a" stroke-width="1"/><path d="M10,1.5V6H14.5" fill="#f4f4f4" stroke="#8a8a8a" stroke-width=".8"/><ellipse cx="6.3" cy="12.3" rx="2" ry="1.5" transform="rotate(-15 6.3 12.3)" fill="#1e88d8"/><path d="M7.8,12.3V4.6C9.8,5.6 10.8,7.4 10,10C9.9,8.6 9.2,7.6 8.2,7.2" fill="none" stroke="#1e88d8" stroke-width="1.1"/></svg><div class="it" style="left:31px;top:149px">Softpedia Extraction.mp3</div>
<div id="hint">Use the mouse with &lt;Ctrl&gt; to select and edit separate channels, &lt;Shift&gt; to resize channels fields</div>
<div id="wv"></div>
<svg id="wvsvg" viewBox="0 0 947 618" shape-rendering="crispEdges">
<rect x="312.5" y="101.5" width="619" height="442" fill="#f4f4f4" stroke="#9a9a9a"/>
<rect x="313" y="102" width="618" height="1" fill="#fff"/>
<rect x="313" y="103" width="617" height="8" fill="#7b98b0"/>
<rect x="312.5" y="120.5" width="619" height="192" fill="#eeeeee" stroke="#a0a0a0"/>
<rect x="312.5" y="315.5" width="619" height="193" fill="#eeeeee" stroke="#a0a0a0"/>
<rect x="313" y="313" width="618" height="2" fill="#fff"/>
<rect x="313" y="518" width="618" height="1" fill="#fdfdfd"/>
<rect x="313" y="519" width="618" height="24" fill="#f1f1f1"/>
<rect x="313" y="128" width="617" height="1" fill="#941c2c"/>
<rect x="313" y="304" width="617" height="1" fill="#941c2c"/>
<rect x="313" y="324" width="617" height="1" fill="#941c2c"/>
<rect x="313" y="500" width="617" height="1" fill="#941c2c"/>
<path d="M313.5,216V218M314.5,215V218M315.5,215V218M316.5,216V218M317.5,215V218M318.5,216V218M319.5,216V218M320.5,215V217M321.5,215V218M322.5,215V218M323.5,215V218M324.5,215V218M325.5,215V218M326.5,215V219M327.5,214V219M328.5,214V219M329.5,212V221M330.5,212V220M331.5,210V221M332.5,212V221M333.5,199V222M334.5,209V222M335.5,205V224M336.5,203V223M337.5,207V227M338.5,206V226M339.5,197V230M340.5,204V227M341.5,204V233M342.5,196V231M343.5,197V228M344.5,198V235M345.5,193V228M346.5,193V229M347.5,191V229M348.5,191V232M349.5,199V236M350.5,194V232M351.5,201V231M352.5,194V232M353.5,202V236M354.5,197V236M355.5,190V241M356.5,190V231M357.5,183V241M358.5,192V240M359.5,192V240M360.5,191V241M361.5,189V240M362.5,190V237M363.5,185V237M364.5,189V239M365.5,193V251M366.5,201V237M367.5,192V236M368.5,198V230M369.5,199V232M370.5,196V241M371.5,199V235M372.5,190V234M373.5,200V235M374.5,192V241M375.5,196V233M376.5,194V235M377.5,184V235M378.5,202V238M379.5,192V229M380.5,202V239M381.5,202V236M382.5,195V238M383.5,201V240M384.5,195V230M385.5,195V234M386.5,199V248M387.5,196V229M388.5,194V231M389.5,195V237M390.5,202V235M391.5,196V230M392.5,192V233M393.5,193V245M394.5,197V247M395.5,203V236M396.5,194V229M397.5,195V237M398.5,193V238M399.5,200V236M400.5,193V234M401.5,193V238M402.5,191V234M403.5,196V244M404.5,197V233M405.5,190V236M406.5,191V239M407.5,201V233M408.5,197V232M409.5,191V233M410.5,200V236M411.5,195V230M412.5,196V231M413.5,197V233M414.5,201V231M415.5,196V238M416.5,200V237M417.5,198V232M418.5,189V239M419.5,182V232M420.5,191V231M421.5,202V232M422.5,189V231M423.5,195V243M424.5,201V236M425.5,200V232M426.5,183V241M427.5,195V239M428.5,194V244M429.5,190V232M430.5,196V232M431.5,201V241M432.5,189V238M433.5,194V242M434.5,189V239M435.5,196V241M436.5,191V239M437.5,201V240M438.5,193V238M439.5,192V234M440.5,194V235M441.5,192V250M442.5,191V237M443.5,196V231M444.5,194V236M445.5,188V247M446.5,191V230M447.5,195V232M448.5,201V242M449.5,194V234M450.5,194V233M451.5,199V233M452.5,197V256M453.5,189V231M454.5,195V242M455.5,189V239M456.5,182V237M457.5,199V230M458.5,196V238M459.5,194V235M460.5,189V242M461.5,201V241M462.5,197V233M463.5,194V238M464.5,199V242M465.5,201V231M466.5,193V235M467.5,192V237M468.5,195V233M469.5,178V231M470.5,191V233M471.5,190V235M472.5,197V237M473.5,186V239M474.5,193V236M475.5,190V231M476.5,200V234M477.5,197V232M478.5,196V253M479.5,188V243M480.5,189V234M481.5,187V242M482.5,196V235M483.5,198V238M484.5,189V238M485.5,178V234M486.5,173V243M487.5,200V243M488.5,180V242M489.5,190V239M490.5,189V238M491.5,196V244M492.5,193V240M493.5,195V242M494.5,188V257M495.5,191V238M496.5,194V236M497.5,186V236M498.5,194V241M499.5,199V240M500.5,200V237M501.5,200V232M502.5,197V241M503.5,176V261M504.5,196V238M505.5,196V243M506.5,192V244M507.5,200V244M508.5,192V238M509.5,182V234M510.5,188V241M511.5,198V236M512.5,174V263M513.5,192V242M514.5,180V243M515.5,199V238M516.5,191V243M517.5,184V244M518.5,191V239M519.5,190V236M520.5,189V244M521.5,178V245M522.5,200V237M523.5,179V238M524.5,197V240M525.5,191V236M526.5,189V235M527.5,195V245M528.5,191V256M529.5,189V234M530.5,191V233M531.5,190V237M532.5,192V241M533.5,194V243M534.5,189V245M535.5,190V232M536.5,190V233M537.5,187V243M538.5,188V244M539.5,192V233M540.5,192V242M541.5,185V247M542.5,191V241M543.5,194V238M544.5,198V244M545.5,191V235M546.5,187V240M547.5,196V244M548.5,187V237M549.5,197V245M550.5,196V240M551.5,186V242M552.5,198V236M553.5,192V235M554.5,190V231M555.5,186V239M556.5,191V240M557.5,193V245M558.5,194V237M559.5,192V238M560.5,196V232M561.5,189V239M562.5,192V232M563.5,184V236M564.5,197V235M565.5,200V243M566.5,188V236M567.5,190V250M568.5,199V244M569.5,188V235M570.5,195V239M571.5,188V234M572.5,188V236M573.5,189V240M574.5,198V235M575.5,190V231M576.5,182V229M577.5,192V238M578.5,195V245M579.5,201V235M580.5,202V234M581.5,199V235M582.5,203V235M583.5,201V226M584.5,198V230M585.5,203V231M586.5,207V226M587.5,199V230M588.5,207V229M589.5,207V226M590.5,207V225M591.5,209V224M592.5,209V222M593.5,211V223M594.5,212V221M595.5,212V220M596.5,212V224M597.5,212V221M598.5,210V220M599.5,211V227M600.5,212V222M601.5,206V223M602.5,211V221M603.5,209V221M604.5,207V225M605.5,207V222M606.5,211V226M607.5,208V223M608.5,208V225M609.5,209V222M610.5,210V223M611.5,211V227M612.5,208V225M613.5,209V223M614.5,207V222M615.5,209V222M616.5,209V223M617.5,209V225M618.5,211V224M619.5,212V222M620.5,208V224M621.5,211V225M622.5,205V224M623.5,212V224M624.5,210V221M625.5,212V224M626.5,205V223M627.5,207V223M628.5,210V222M629.5,212V221M630.5,213V220M631.5,210V224M632.5,210V221M633.5,210V223M634.5,212V225M635.5,212V226M636.5,211V221M637.5,212V226M638.5,210V226M639.5,211V223M640.5,211V222M641.5,213V221M642.5,212V223M643.5,211V224M644.5,209V223M645.5,211V222M646.5,209V224M647.5,211V222M648.5,212V221M649.5,212V221M650.5,212V222M651.5,210V223M652.5,211V222M653.5,210V223M654.5,209V221M655.5,210V222M656.5,210V222M657.5,210V225M658.5,210V221M659.5,210V221M660.5,212V222M661.5,211V224M662.5,211V222M663.5,209V223M664.5,210V229M665.5,210V226M666.5,201V224M667.5,210V222M668.5,211V223M669.5,205V231M670.5,210V222M671.5,209V222M672.5,209V224M673.5,208V232M674.5,208V227M675.5,212V223M676.5,211V224M677.5,206V222M678.5,209V221M679.5,211V229M680.5,210V223M681.5,209V224M682.5,207V223M683.5,211V223M684.5,212V225M685.5,209V224M686.5,209V224M687.5,212V224M688.5,207V224M689.5,211V222M690.5,211V223M691.5,204V222M692.5,211V224M693.5,209V221M694.5,212V223M695.5,210V224M696.5,204V224M697.5,209V222M698.5,211V222M699.5,211V222M700.5,212V223M701.5,211V223M702.5,210V230M703.5,210V223M704.5,211V222M705.5,210V221M706.5,210V228M707.5,209V224M708.5,209V230M709.5,210V222M710.5,209V224M711.5,209V221M712.5,211V224M713.5,209V221M714.5,212V223M715.5,211V224M716.5,210V229M717.5,212V221M718.5,209V221M719.5,209V231M720.5,212V223M721.5,212V227M722.5,211V223M723.5,203V221M724.5,212V221M725.5,211V221M726.5,210V222M727.5,212V223M728.5,211V222M729.5,211V223M730.5,211V224M731.5,210V222M732.5,209V228M733.5,211V222M734.5,210V223M735.5,212V224M736.5,211V224M737.5,210V224M738.5,211V224M739.5,201V224M740.5,211V223M741.5,210V225M742.5,211V224M743.5,208V221M744.5,210V222M745.5,211V221M746.5,212V221M747.5,210V222M748.5,210V226M749.5,204V224M750.5,211V221M751.5,211V223M752.5,211V222M753.5,211V221M754.5,211V228M755.5,212V224M756.5,211V223M757.5,213V221M758.5,210V222M759.5,212V224M760.5,211V228M761.5,212V222M762.5,210V223M763.5,211V222M764.5,211V222M765.5,206V227M766.5,211V226M767.5,211V224M768.5,209V222M769.5,211V226M770.5,207V225M771.5,206V226M772.5,200V225M773.5,201V228M774.5,198V231M775.5,203V229M776.5,198V232M777.5,198V249M778.5,187V234M779.5,196V257M780.5,198V237M781.5,198V230M782.5,202V231M783.5,150V273M784.5,196V240M785.5,196V239M786.5,158V229M787.5,195V240M788.5,192V239M789.5,197V232M790.5,200V236M791.5,197V239M792.5,198V241M793.5,201V232M794.5,201V230M795.5,196V235M796.5,193V241M797.5,198V239M798.5,204V238M799.5,201V232M800.5,195V231M801.5,202V237M802.5,195V237M803.5,196V234M804.5,201V241M805.5,201V230M806.5,201V233M807.5,201V234M808.5,154V277M809.5,197V237M810.5,196V242M811.5,203V243M812.5,201V267M813.5,192V237M814.5,193V243M815.5,198V259M816.5,193V248M817.5,196V244M818.5,185V238M819.5,196V236M820.5,152V291M821.5,195V244M822.5,198V236M823.5,189V245M824.5,189V232M825.5,192V241M826.5,200V245M827.5,184V246M828.5,191V240M829.5,177V232M830.5,188V239M831.5,200V245M832.5,192V238M833.5,196V247M834.5,195V241M835.5,195V269M836.5,195V248M837.5,193V240M838.5,171V243M839.5,194V242M840.5,191V251M841.5,195V249M842.5,166V279M843.5,182V255M844.5,189V236M845.5,192V251M846.5,189V252M847.5,175V239M848.5,176V249M849.5,186V238M850.5,192V247M851.5,189V238M852.5,180V250M853.5,184V240M854.5,170V246M855.5,178V242M856.5,180V248M857.5,186V276M858.5,181V238M859.5,163V241M860.5,179V250M861.5,185V243M862.5,183V246M863.5,184V254M864.5,180V281M865.5,187V255M866.5,189V247M867.5,189V251M868.5,190V274M869.5,186V247M870.5,148V267M871.5,183V262M872.5,185V248M873.5,186V238M874.5,179V251M875.5,186V244M876.5,156V245M877.5,187V242M878.5,181V250M879.5,184V250M880.5,183V238M881.5,186V252M882.5,184V246M883.5,187V248M884.5,184V240M885.5,186V252M886.5,140V295M887.5,187V249M888.5,189V242M889.5,200V236M890.5,190V246M891.5,196V237M892.5,190V247M893.5,188V237M894.5,188V243M895.5,186V238M896.5,150V241M897.5,196V237M898.5,200V236M899.5,200V233M900.5,194V229M901.5,198V233M902.5,198V229M903.5,203V230M904.5,203V227M905.5,206V230M906.5,158V293M907.5,201V224M908.5,207V224M909.5,206V225M910.5,207V225M911.5,203V222M912.5,211V227M913.5,208V227M914.5,210V226M915.5,210V226M916.5,200V223M917.5,210V223M918.5,211V224M919.5,209V223M920.5,208V224M921.5,210V222M922.5,211V223M923.5,212V222M924.5,210V222M925.5,213V221M926.5,212V222M927.5,213V220M928.5,213V220M929.5,215V219M930.5,214V218M313.5,411V414M314.5,411V413M315.5,411V414M316.5,411V413M317.5,412V414M318.5,412V414M319.5,412V413M320.5,411V414M321.5,411V414M322.5,411V413M323.5,411V414M324.5,411V414M325.5,410V414M326.5,410V415M327.5,410V415M328.5,409V415M329.5,409V416M330.5,406V416M331.5,405V417M332.5,406V420M333.5,406V421M334.5,404V421M335.5,398V422M336.5,404V425M337.5,396V427M338.5,395V423M339.5,400V422M340.5,391V438M341.5,398V427M342.5,395V432M343.5,388V432M344.5,393V432M345.5,395V428M346.5,390V440M347.5,393V432M348.5,384V426M349.5,394V432M350.5,387V426M351.5,395V437M352.5,395V442M353.5,390V435M354.5,372V441M355.5,383V434M356.5,387V431M357.5,392V457M358.5,390V438M359.5,388V431M360.5,374V434M361.5,388V433M362.5,383V430M363.5,396V438M364.5,387V439M365.5,373V431M366.5,394V441M367.5,396V436M368.5,389V437M369.5,383V436M370.5,394V429M371.5,389V432M372.5,382V434M373.5,384V441M374.5,380V442M375.5,375V439M376.5,383V435M377.5,395V432M378.5,368V434M379.5,385V434M380.5,386V442M381.5,388V436M382.5,372V434M383.5,382V428M384.5,383V438M385.5,385V437M386.5,374V459M387.5,384V432M388.5,385V436M389.5,378V432M390.5,386V440M391.5,395V440M392.5,392V438M393.5,393V458M394.5,394V429M395.5,379V437M396.5,372V443M397.5,392V453M398.5,385V431M399.5,379V428M400.5,386V436M401.5,393V440M402.5,387V441M403.5,394V433M404.5,381V431M405.5,393V430M406.5,385V434M407.5,387V436M408.5,382V440M409.5,382V439M410.5,393V435M411.5,387V452M412.5,389V441M413.5,377V432M414.5,383V439M415.5,385V456M416.5,391V439M417.5,390V429M418.5,382V434M419.5,383V431M420.5,395V441M421.5,393V439M422.5,379V443M423.5,393V433M424.5,379V438M425.5,379V434M426.5,388V441M427.5,390V430M428.5,379V440M429.5,390V430M430.5,378V435M431.5,393V438M432.5,379V443M433.5,378V431M434.5,382V434M435.5,380V429M436.5,376V437M437.5,368V434M438.5,385V440M439.5,384V442M440.5,382V455M441.5,382V440M442.5,377V438M443.5,379V441M444.5,380V454M445.5,385V430M446.5,382V441M447.5,392V438M448.5,393V439M449.5,379V442M450.5,391V465M451.5,392V430M452.5,380V429M453.5,383V428M454.5,395V435M455.5,385V430M456.5,376V436M457.5,393V430M458.5,387V441M459.5,384V429M460.5,381V428M461.5,386V429M462.5,372V439M463.5,369V436M464.5,384V433M465.5,390V441M466.5,381V429M467.5,387V438M468.5,395V453M469.5,395V434M470.5,391V429M471.5,396V439M472.5,396V437M473.5,395V431M474.5,395V439M475.5,384V433M476.5,390V429M477.5,392V438M478.5,388V428M479.5,388V438M480.5,390V437M481.5,390V435M482.5,390V435M483.5,389V432M484.5,370V433M485.5,398V430M486.5,397V427M487.5,398V430M488.5,398V426M489.5,392V426M490.5,395V429M491.5,394V429M492.5,395V441M493.5,392V430M494.5,392V425M495.5,390V430M496.5,388V429M497.5,388V434M498.5,386V429M499.5,393V426M500.5,397V438M501.5,380V435M502.5,397V435M503.5,386V435M504.5,384V433M505.5,386V439M506.5,383V437M507.5,384V438M508.5,385V440M509.5,384V431M510.5,385V433M511.5,382V440M512.5,392V459M513.5,387V430M514.5,387V435M515.5,384V436M516.5,378V439M517.5,389V434M518.5,391V435M519.5,383V440M520.5,380V438M521.5,372V449M522.5,382V448M523.5,384V435M524.5,387V431M525.5,384V437M526.5,389V429M527.5,391V451M528.5,379V432M529.5,391V436M530.5,370V429M531.5,383V433M532.5,381V433M533.5,381V457M534.5,383V441M535.5,393V434M536.5,389V442M537.5,390V433M538.5,396V440M539.5,386V439M540.5,389V440M541.5,383V441M542.5,386V435M543.5,383V437M544.5,382V433M545.5,368V430M546.5,387V463M547.5,387V436M548.5,394V439M549.5,392V442M550.5,389V437M551.5,389V433M552.5,392V439M553.5,394V434M554.5,382V446M555.5,366V439M556.5,386V439M557.5,397V431M558.5,378V439M559.5,394V435M560.5,374V439M561.5,395V430M562.5,397V430M563.5,393V436M564.5,389V436M565.5,394V429M566.5,392V427M567.5,390V436M568.5,392V427M569.5,397V429M570.5,397V429M571.5,390V426M572.5,398V426M573.5,389V429M574.5,396V433M575.5,398V426M576.5,401V423M577.5,397V424M578.5,394V425M579.5,398V423M580.5,400V422M581.5,402V425M582.5,404V431M583.5,397V420M584.5,403V425M585.5,404V423M586.5,404V423M587.5,399V419M588.5,405V428M589.5,405V420M590.5,406V426M591.5,401V418M592.5,409V419M593.5,406V418M594.5,408V419M595.5,407V416M596.5,407V418M597.5,401V416M598.5,405V417M599.5,407V418M600.5,407V417M601.5,406V419M602.5,404V417M603.5,408V417M604.5,407V417M605.5,406V417M606.5,406V425M607.5,406V417M608.5,408V417M609.5,407V418M610.5,405V422M611.5,408V424M612.5,407V419M613.5,406V418M614.5,406V419M615.5,407V418M616.5,407V418M617.5,406V419M618.5,407V420M619.5,406V419M620.5,398V416M621.5,407V419M622.5,408V424M623.5,409V417M624.5,406V419M625.5,408V418M626.5,408V419M627.5,409V417M628.5,406V418M629.5,407V418M630.5,409V418M631.5,406V417M632.5,408V419M633.5,405V418M634.5,403V419M635.5,406V417M636.5,407V418M637.5,408V420M638.5,408V419M639.5,408V418M640.5,408V419M641.5,400V419M642.5,408V417M643.5,406V417M644.5,407V419M645.5,407V417M646.5,407V417M647.5,407V417M648.5,404V417M649.5,402V418M650.5,405V418M651.5,405V420M652.5,406V421M653.5,406V418M654.5,405V417M655.5,405V418M656.5,407V419M657.5,406V418M658.5,406V420M659.5,407V418M660.5,408V419M661.5,408V419M662.5,408V419M663.5,408V420M664.5,404V420M665.5,404V426M666.5,408V417M667.5,408V419M668.5,403V419M669.5,405V417M670.5,406V422M671.5,408V417M672.5,407V426M673.5,405V418M674.5,406V419M675.5,407V419M676.5,401V420M677.5,408V418M678.5,406V417M679.5,407V420M680.5,407V417M681.5,408V418M682.5,406V419M683.5,407V420M684.5,403V417M685.5,408V418M686.5,407V419M687.5,407V416M688.5,408V418M689.5,407V418M690.5,408V417M691.5,407V420M692.5,406V417M693.5,407V418M694.5,409V418M695.5,408V419M696.5,407V423M697.5,405V419M698.5,408V419M699.5,406V419M700.5,406V419M701.5,407V419M702.5,406V418M703.5,406V420M704.5,406V417M705.5,400V418M706.5,401V419M707.5,408V419M708.5,406V417M709.5,406V422M710.5,408V424M711.5,406V418M712.5,408V418M713.5,408V417M714.5,406V418M715.5,407V418M716.5,409V417M717.5,407V419M718.5,407V419M719.5,407V418M720.5,405V421M721.5,409V425M722.5,406V419M723.5,407V417M724.5,407V417M725.5,403V418M726.5,400V422M727.5,408V419M728.5,408V419M729.5,406V417M730.5,409V423M731.5,401V416M732.5,406V418M733.5,409V419M734.5,406V418M735.5,406V419M736.5,406V417M737.5,407V418M738.5,408V417M739.5,408V419M740.5,407V419M741.5,408V417M742.5,407V418M743.5,409V426M744.5,407V416M745.5,407V416M746.5,407V419M747.5,409V417M748.5,406V419M749.5,407V419M750.5,402V426M751.5,406V419M752.5,401V418M753.5,408V417M754.5,408V418M755.5,406V424M756.5,408V418M757.5,406V424M758.5,406V417M759.5,406V418M760.5,401V418M761.5,407V419M762.5,404V419M763.5,407V419M764.5,405V420M765.5,404V420M766.5,400V421M767.5,405V420M768.5,399V421M769.5,398V427M770.5,398V421M771.5,390V429M772.5,400V436M773.5,399V429M774.5,389V430M775.5,388V432M776.5,373V426M777.5,389V427M778.5,396V437M779.5,388V433M780.5,381V439M781.5,377V433M782.5,390V430M783.5,390V435M784.5,376V438M785.5,383V435M786.5,389V440M787.5,375V487M788.5,386V443M789.5,367V463M790.5,345V450M791.5,384V447M792.5,366V448M793.5,380V450M794.5,355V446M795.5,371V465M796.5,374V439M797.5,346V435M798.5,374V433M799.5,386V452M800.5,388V471M801.5,380V446M802.5,387V437M803.5,369V447M804.5,393V462M805.5,394V439M806.5,372V431M807.5,388V442M808.5,383V431M809.5,382V438M810.5,374V441M811.5,395V431M812.5,356V435M813.5,387V446M814.5,384V442M815.5,384V436M816.5,384V450M817.5,386V442M818.5,378V437M819.5,377V447M820.5,382V446M821.5,385V453M822.5,387V442M823.5,382V435M824.5,375V449M825.5,386V436M826.5,356V444M827.5,389V437M828.5,381V447M829.5,376V440M830.5,378V439M831.5,382V439M832.5,392V437M833.5,385V448M834.5,387V445M835.5,390V444M836.5,387V433M837.5,388V431M838.5,396V440M839.5,338V487M840.5,385V443M841.5,389V434M842.5,388V434M843.5,387V442M844.5,386V442M845.5,375V437M846.5,390V438M847.5,373V439M848.5,364V450M849.5,354V490M850.5,386V457M851.5,388V434M852.5,375V440M853.5,381V455M854.5,384V442M855.5,376V447M856.5,386V440M857.5,352V440M858.5,364V435M859.5,366V469M860.5,376V449M861.5,366V448M862.5,369V441M863.5,365V438M864.5,381V446M865.5,382V445M866.5,352V444M867.5,360V437M868.5,385V435M869.5,381V446M870.5,380V446M871.5,373V439M872.5,372V443M873.5,372V452M874.5,354V437M875.5,371V437M876.5,376V440M877.5,386V447M878.5,380V446M879.5,375V445M880.5,381V445M881.5,375V441M882.5,389V440M883.5,389V450M884.5,378V463M885.5,373V435M886.5,386V437M887.5,380V445M888.5,383V442M889.5,387V443M890.5,392V432M891.5,388V440M892.5,395V433M893.5,393V436M894.5,385V431M895.5,392V434M896.5,387V435M897.5,385V427M898.5,370V430M899.5,401V430M900.5,400V431M901.5,403V429M902.5,401V422M903.5,401V423M904.5,399V424M905.5,405V423M906.5,370V447M907.5,402V419M908.5,405V421M909.5,402V419M910.5,403V423M911.5,405V419M912.5,406V419M913.5,407V418M914.5,393V421M915.5,403V421M916.5,404V421M917.5,390V429M918.5,404V418M919.5,407V419M920.5,408V418M921.5,407V417M922.5,408V426M923.5,409V425M924.5,409V418M925.5,410V415M926.5,409V418M927.5,410V415M928.5,410V415M929.5,410V414M930.5,411V414" stroke="#7b98b0" stroke-width="1" fill="none"/>
<path d="M424,103H532V111H424ZM424,121H533V509H424ZM424,519H533V543H424Z" fill="rgba(66,110,148,0.4)"/>
<path d="M349.5,121V312M386.5,121V312M422.5,121V312M458.5,121V312M495.5,121V312M531.5,121V312M568.5,121V312M604.5,121V312M640.5,121V312M677.5,121V312M713.5,121V312M750.5,121V312M786.5,121V312M822.5,121V312M859.5,121V312M895.5,121V312" stroke="#12325a" stroke-width="1" stroke-dasharray="3,3" stroke-dashoffset="2" fill="none"/>
<path d="M349.5,316V508M386.5,316V508M422.5,316V508M458.5,316V508M495.5,316V508M531.5,316V508M568.5,316V508M604.5,316V508M640.5,316V508M677.5,316V508M713.5,316V508M750.5,316V508M786.5,316V508M822.5,316V508M859.5,316V508M895.5,316V508" stroke="#12325a" stroke-width="1" stroke-dasharray="3,3" stroke-dashoffset="5" fill="none"/>
<path d="M424,113H432.5L424,121.5ZM533,113H524.5L533,121.5ZM424,508.5L433,517.5H424ZM533,508.5L524,517.5H533Z" fill="#7e1220" shape-rendering="auto"/>
<path d="M313.5,519V526M331.5,519V522M349.5,519V526M367.5,519V522M386.5,519V526M404.5,519V522M422.5,519V526M440.5,519V522M458.5,519V526M477.5,519V522M495.5,519V526M513.5,519V522M531.5,519V526M549.5,519V522M568.5,519V526M586.5,519V522M604.5,519V526M622.5,519V522M640.5,519V526M659.5,519V522M677.5,519V526M695.5,519V522M713.5,519V526M731.5,519V522M750.5,519V526M768.5,519V522M786.5,519V526M804.5,519V522M822.5,519V526M841.5,519V522M859.5,519V526M877.5,519V522M895.5,519V526M913.5,519V522" stroke="#111" stroke-width="1" fill="none"/>
</svg>
<div class="tl" style="left:313px;top:529px">Hms</div>
<div class="tl" style="left:372.0px;top:529px;width:30px;text-align:center">0:02</div>
<div class="tl" style="left:408.4px;top:529px;width:30px;text-align:center">0:03</div>
<div class="tl" style="left:444.8px;top:529px;width:30px;text-align:center">0:04</div>
<div class="tl" style="left:481.1px;top:529px;width:30px;text-align:center">0:05</div>
<div class="tl" style="left:517.5px;top:529px;width:30px;text-align:center">0:06</div>
<div class="tl" style="left:553.9px;top:529px;width:30px;text-align:center">0:07</div>
<div class="tl" style="left:590.3px;top:529px;width:30px;text-align:center">0:08</div>
<div class="tl" style="left:626.7px;top:529px;width:30px;text-align:center">0:09</div>
<div class="tl" style="left:663.1px;top:529px;width:30px;text-align:center">0:10</div>
<div class="tl" style="left:699.5px;top:529px;width:30px;text-align:center">0:11</div>
<div class="tl" style="left:735.9px;top:529px;width:30px;text-align:center">0:12</div>
<div class="tl" style="left:772.3px;top:529px;width:30px;text-align:center">0:13</div>
<div class="tl" style="left:808.7px;top:529px;width:30px;text-align:center">0:14</div>
<div class="tl" style="left:845.0px;top:529px;width:30px;text-align:center">0:15</div>
<div class="tl" style="left:881.4px;top:529px;width:30px;text-align:center">0:16</div>
<div style="left:411px;top:74px;font-family:'Liberation Serif',serif;font-size:22.5px;line-height:26px;color:#fff;opacity:.6;letter-spacing:.6px;white-space:nowrap;text-shadow:0 0 1px #fff">SOFTPEDIA</div>
<div style="left:430px;top:103px;font-family:'DejaVu Sans Condensed','Liberation Sans',sans-serif;font-size:11.5px;line-height:14px;color:#fff;opacity:.45;white-space:nowrap;transform:scaleX(.8);transform-origin:0 0">www.softpedia.com</div>
<div id="status"></div>
<div style="left:327px;top:593px;width:2px;height:17px;background:linear-gradient(90deg,#b8b8b8 50%,#fff 50%)"></div>
<div style="left:934px;top:593px;width:2px;height:17px;background:linear-gradient(90deg,#b8b8b8 50%,#fff 50%)"></div>
<div style="left:443px;top:593px;width:2px;height:17px;background:linear-gradient(90deg,#b8b8b8 50%,#fff 50%)"></div>
<div id="stxt">C:\Softpedia\Softpedia.mp3</div>
</body></html>
